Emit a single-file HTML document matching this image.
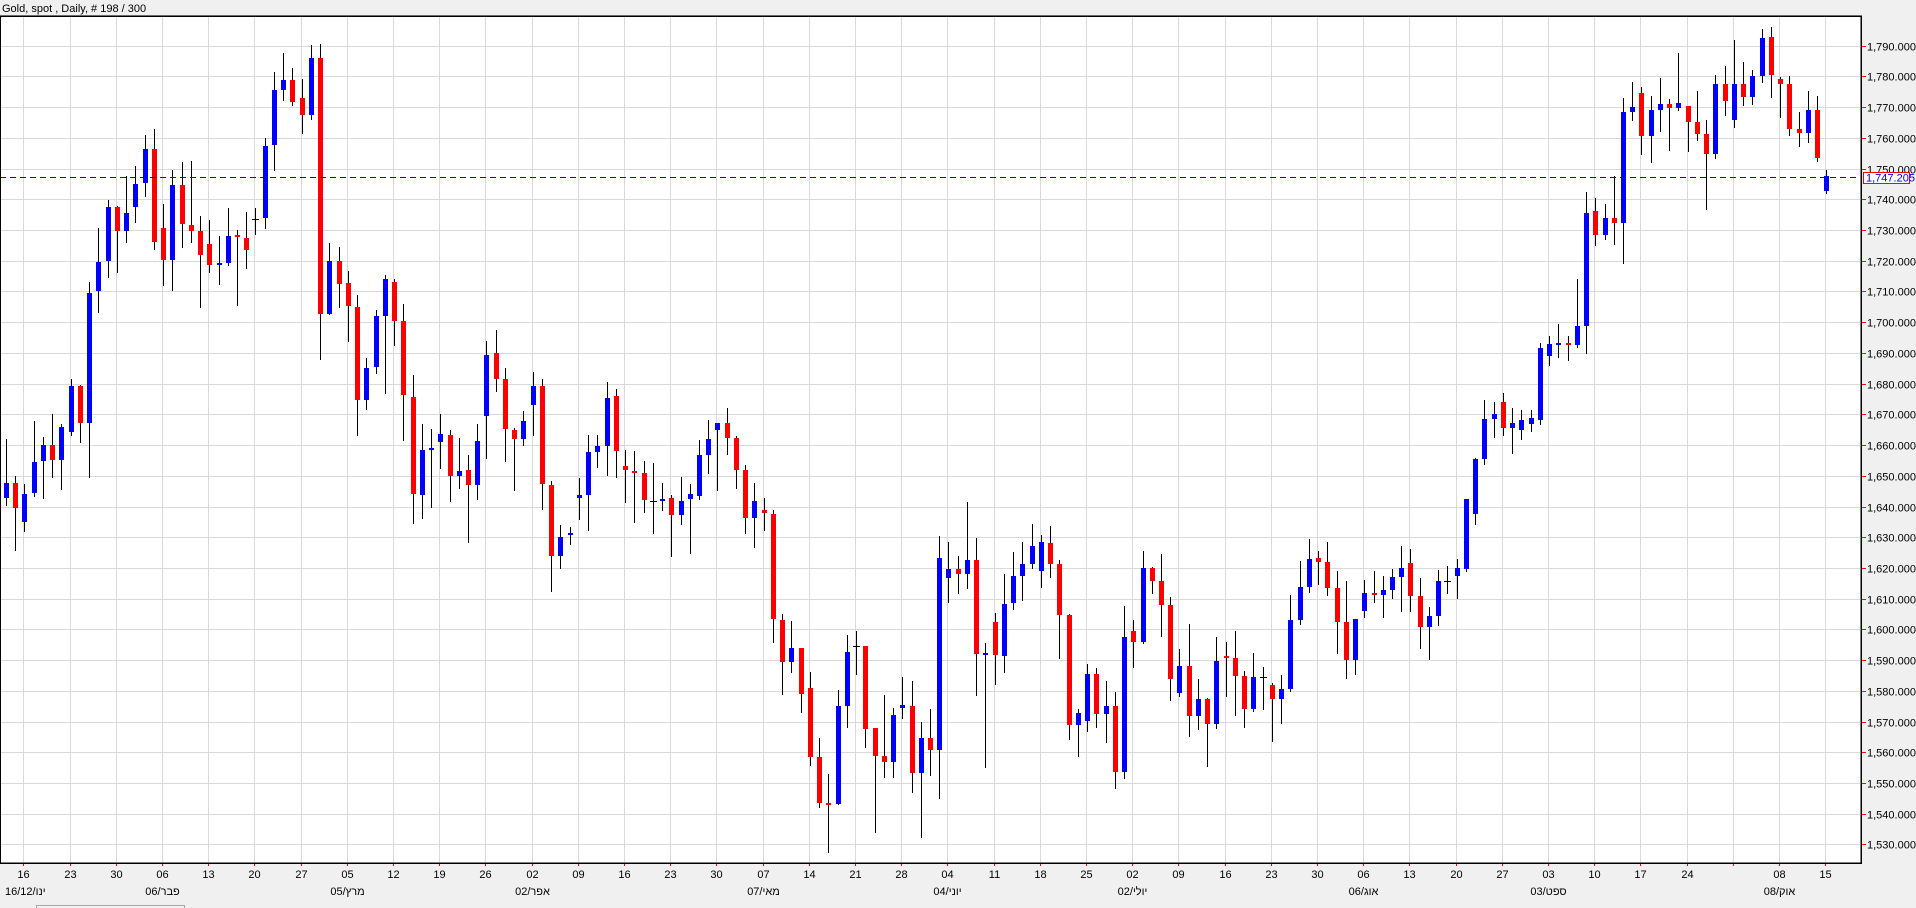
<!DOCTYPE html>
<html><head><meta charset="utf-8">
<style>
html,body{margin:0;padding:0;background:#f0f0f0;}
body{width:1916px;height:908px;overflow:hidden;position:relative;font-family:"Liberation Sans",Arial,sans-serif;}
svg{position:absolute;left:0;top:0;}
</style></head>
<body>
<svg id="s" width="1916" height="908" xmlns="http://www.w3.org/2000/svg" shape-rendering="crispEdges">
<rect x="0" y="0" width="1916" height="908" fill="#f0f0f0"/>
<rect x="0" y="16" width="1861" height="847" fill="#ffffff"/>
<text x="2" y="12" font-size="11" font-family="Liberation Sans, sans-serif" fill="#000">Gold, spot , Daily, # 198 / 300</text>
<g id="grid"></g>
<g id="candles"></g>
<line x1="0" y1="177.5" x2="1860" y2="177.5" stroke="#0000ff" stroke-width="1" stroke-dasharray="6,4"/>
<g id="axis"></g>
<rect x="0" y="16" width="1861" height="847" fill="none" stroke="#000" stroke-width="1.5"/>
<rect x="36.5" y="905.5" width="148" height="6" fill="#f4f4f4" stroke="#a8a8a8"/>
</svg>
<script>
(function(){
var NS="http://www.w3.org/2000/svg";
function el(p,t,a,txt){var e=document.createElementNS(NS,t);for(var k in a)e.setAttribute(k,a[k]);if(txt!=null)e.textContent=txt;p.appendChild(e);return e;}
var grid=document.getElementById('grid'),axis=document.getElementById('axis'),cg=document.getElementById('candles');
function py(p){return 45.7+(1790-p)*3.072;}
// horizontal grid + price labels
for(var p=1530;p<=1800;p+=10){
  var y=Math.round(py(p))+0.5;
  el(grid,'line',{x1:0,y1:y,x2:1860,y2:y,stroke:'#d9d9d9','stroke-width':1});
  if(p<=1790){
    el(axis,'line',{x1:1861,y1:y,x2:1866,y2:y,stroke:'#ff0000','stroke-width':1});
    var s=p.toString();s=s.charAt(0)+','+s.slice(1)+'.000';
    el(axis,'text',{x:1867,y:y+4,'font-size':11,'font-family':'Liberation Sans, sans-serif',fill:'#000'},s);
  }
}
// current price box
el(axis,'rect',{x:1863.5,y:172.5,width:46,height:11,fill:'#ffffff',stroke:'#ff0000','stroke-width':1});
el(axis,'text',{x:1866,y:181.5,'font-size':11,'font-family':'Liberation Sans, sans-serif',fill:'#0000ff'},'1,747.205');
// vertical grid + date labels
var days=['16','23','30','06','13','20','27','05','12','19','26','02','09','16','23','30','07','14','21','28','04','11','18','25','02','09','16','23','30','06','13','20','27','03','10','17','24','','08','15'];
var months={3:'06/פבר',7:'05/מרץ',11:'02/אפר',16:'07/מאי',20:'04/יוני',24:'02/יולי',29:'06/אוג',33:'03/ספט',38:'08/אוק'};
for(var k=0;k<40;k++){
  var x=Math.round(23.3+k*46.2)+0.5;
  el(grid,'line',{x1:x,y1:16,x2:x,y2:862,stroke:'#d9d9d9','stroke-width':1});
  el(axis,'line',{x1:x,y1:863,x2:x,y2:866,stroke:'#ff0000','stroke-width':1});
  if(days[k])el(axis,'text',{x:x,y:878,'font-size':11,'text-anchor':'middle','font-family':'Liberation Sans, sans-serif',fill:'#000'},days[k]);
  if(months[k])el(axis,'text',{x:x,y:895,'font-size':11,'text-anchor':'middle','font-family':'Liberation Sans, sans-serif',fill:'#000',direction:'ltr'},months[k]);
}
el(axis,'text',{x:5,y:895,'font-size':11,'font-family':'Liberation Sans, sans-serif',fill:'#000'},'16/12/ינו');

// candle data: [color, bodyTop, bodyBot, wickTop, wickBot] in zoom coords
var Z1=`b,957,987,869,1003
r,957,1007,944,1093
b,979,1035,959,1055
b,915,978,834,985
b,881,914,865,989
r,881,912,820,948
b,846,912,840,972
b,764,856,750,864
r,764,839,762,877
b,580,839,558,948
b,518,577,451,620
b,409,517,395,551
r,409,456,407,541
b,421,456,347,481
b,363,410,327,442
b,294,362,266,390
r,294,479,254,495
r,451,515,404,567
b,365,515,335,577
r,365,444,320,491
r,445,456,318,481
r,457,505,427,610
r,482,525,435,541
b,520,525,467,565
b,466,520,411,527
r,465,469,455,606
r,470,495,419,533
k,433,433,411,465
b,288,432,272,452
b,177,287,141,338
b,157,176,103,199
r,157,201,133,209
r,193,227,155,265
b,113,227,87,237
r,113,622,85,714
b,516,622,480,624
r,516,563,488,610
r,560,606,536,678
r,607,793,584,864
b,728,793,709,813
b,625,727,613,741`;
var Z2=`b,87,197,75,431
r,96,212,87,287
r,213,434,162,572
r,441,731,375,821
b,600,734,522,806
b,594,599,537,773
b,552,575,492,656
r,555,677,540,755
b,663,677,564,716
r,660,704,615,878
b,573,704,522,749
b,315,497,273,626
r,309,386,240,425
r,387,536,354,635
r,540,566,534,722
b,513,566,483,587
b,408,464,366,557
r,408,701,387,779
r,705,917,693,1025
b,861,917,825,956
b,849,852,831,884
b,735,743,684,809
b,606,734,555,842
b,588,605,555,653
b,444,587,396,677
r,438,602,417,683
r,648,659,600,758
r,662,668,603,818
r,669,749,633,788
k,753,753,639,851
b,747,752,699,782
r,744,794,735,922
b,753,794,681,824
b,732,748,702,911
b,615,737,570,749
b,567,614,510,671
b,519,539,519,722
r,519,563,474,614
r,564,659,558,716
r,660,805,645,851
b,753,805,699,893
r,780,790,744,842`;
var Z3=`r,402,718,390,788
r,719,845,702,944
b,803,845,722,878
r,803,941,803,1000
r,924,1130,876,1157`;
var Z11=`r,651,789,593,805
r,789,792,701,938
b,497,792,450,795
b,336,497,285,563
k,319,319,273,405
r,318,566,318,623
r,564,647,564,879
r,648,665,465,713
b,525,665,503,713
b,495,503,410,537
r,498,698,423,758
b,594,698,545,893
r,594,629,507,708
b,54,629,-13,776
b,87,113,6,188
r,87,101,48,161
b,60,101,-114,146
r,60,341,-7,467
b,340,342,309,683
r,246,344,219,434
b,192,347,102,398
b,108,188,36,209
b,72,107,6,182
b,18,71,-48,86
b,6,92,-15,143
r,9,71,-42,113
r,72,224,60,356
r,225,554,222,599
b,519,554,507,650
b,402,542,372,575
r,402,521,384,563
b,497,521,423,608
r,497,695,455,746
b,291,695,198,716
r,273,305,240,383
b,84,305,33,311
r,84,122,81,161
r,123,194,42,290
r,195,416,171,482
b,378,458,327,470
r,378,527,252,590
b,477,527,417,569
r,477,551,473,680
b,363,551,291,566
r,348,353,306,470
r,354,407,273,527
r,408,506,393,563
b,411,506,339,515
k,411,411,381,509
r,435,476,429,605
b,447,476,405,551
b,240,446,165,455
b,141,239,63,254
b,57,140,-4,158
r,54,65,33,134
r,66,143,6,167
r,144,245,93,341
r,246,359,123,416
b,237,359,237,404
b,159,212,120,233
r,159,164,93,188
b,150,164,108,233
b,111,149,87,176
b,84,110,18,215
r,69,167,27,215
r,168,260,114,326
b,228,260,201,359
b,123,227,90,257
k,124,124,78,161
b,84,107,57,176`;
var ZR=`b,498.6,568.9,502.6,572.4
b,459.4,514.1,458.2,525.2
b,419.4,459,399.6,465
b,414.2,419,402.4,438
r,402.4,428.1,393.2,436
b,423.4,428.1,407.5,454.3
b,420,430,410,440
b,418,424,410,432`;
var Z12=`b,985,1200,969,1215
b,972,1007,948,1037
b,969,971,912,1013
r,969,975,948,1022
b,918,974,777,983
b,579,917,516,1003
r,574,644,535,677
b,594,644,552,659
r,594,608,468,674
b,276,608,234,731
b,261,276,186,302
r,219,347,201,404
b,270,347,228,428
b,252,269,174,335
r,252,263,237,392
b,249,263,99,272
r,258,305,258,395
r,306,341,213,362
r,342,401,300,569
b,192,401,165,416
r,192,242,138,287
b,192,299,60,323
r,192,230,126,257
b,168,230,150,254
b,54,167,27,188
r,51,164,21,233
r,177,191,171,293
r,192,326,168,347
r,327,338,276,380
b,270,338,213,368
r,270,413,228,425
b,468,512,450,521`;
var segs=[[Z1,function(v){return v*0.5036+0.9;}],
          [Z2,function(v){return 250+v/3;}],
          [Z3,function(v){return 380+v/3;}],
          [Z11,function(v){return 540+v/3;}],
          [ZR,function(v){return v;}],
          [Z12,function(v){return 20+v/3;}]];
var data=[];
segs.forEach(function(s){
  s[0].split('\n').forEach(function(l){
    var a=l.trim().split(',');if(a.length<5)return;
    data.push([a[0],s[1](+a[1]),s[1](+a[2]),s[1](+a[3]),s[1](+a[4])]);
  });
});
var col={b:'#0000ff',r:'#ff0000',k:'#000000'};
data.forEach(function(d,i){
  var cx=Math.round(6+i*9.24);
  var wt=Math.round(d[3]),wb=Math.round(d[4]);
  el(cg,'rect',{x:cx,y:wt,width:1,height:Math.max(1,wb-wt),fill:'#000'});
  var bt=Math.round(d[1]),bb=Math.round(d[2]);
  if(d[0]==='k'){
    el(cg,'rect',{x:cx-3,y:bt,width:7,height:1,fill:'#000'});
  }else{
    var h=Math.max(2,bb-bt);
    el(cg,'rect',{x:cx-2,y:bt,width:5,height:h,fill:col[d[0]]});
  }
});
})();
</script>
</body></html>
